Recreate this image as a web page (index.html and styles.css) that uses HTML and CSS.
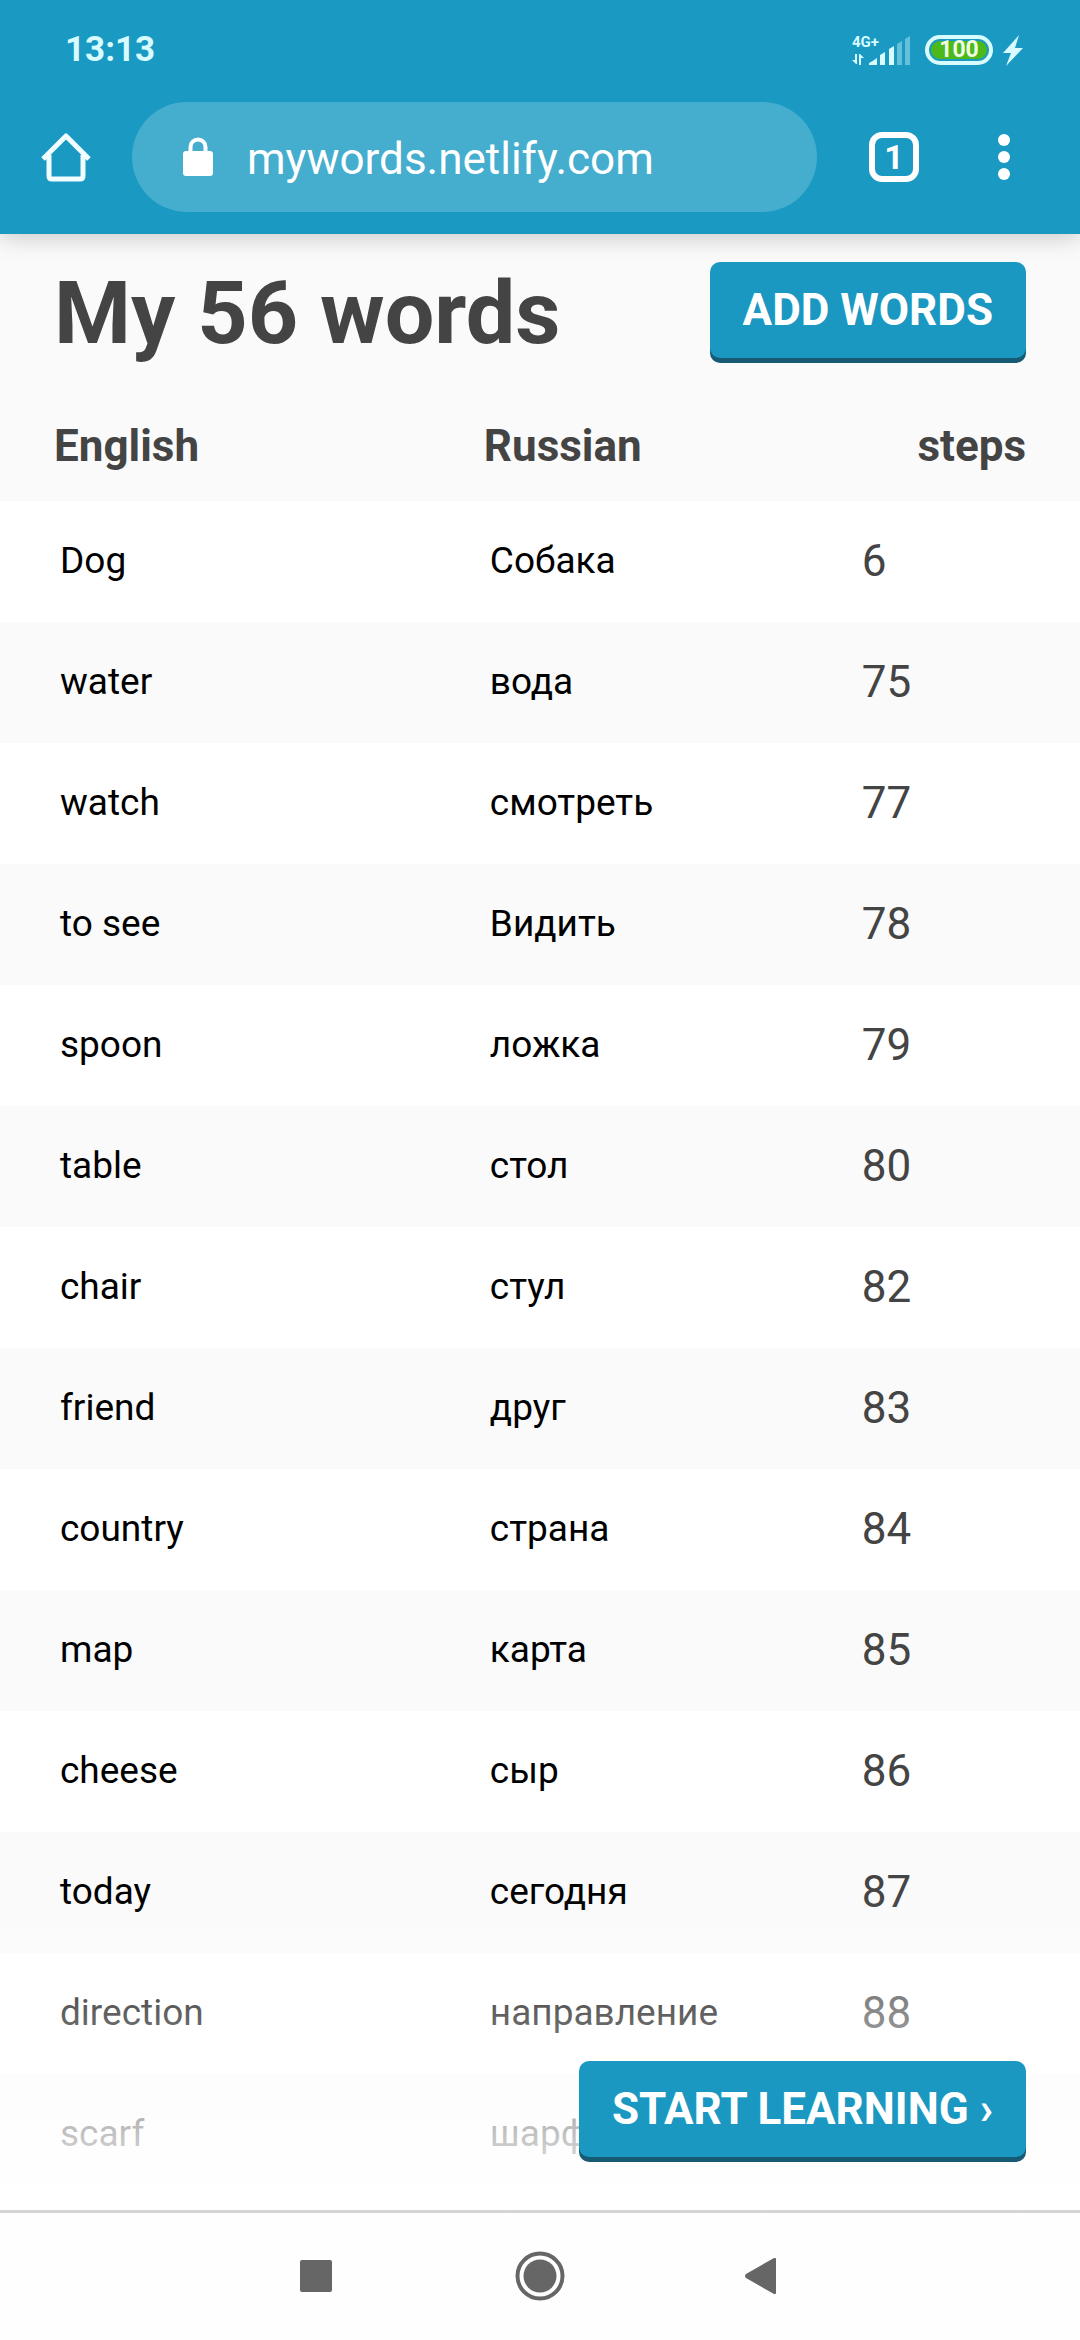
FILE: index.html
```html
<!DOCTYPE html>
<html lang="en">
<head>
<meta charset="utf-8">
<meta name="viewport" content="width=device-width, initial-scale=1">
<title>My words</title>
<link rel="stylesheet" href="styles.css">
</head>
<body>
<header class="chrome">
  <div class="status">
    <span class="clock">13:13</span>
    <div class="indicators">
      <svg class="signal" width="58" height="32" viewBox="0 0 58 32" aria-label="Signal">
        <text class="signal-label" x="0" y="13">4G+</text>
        <path d="M3 20h2v10h-1l-4-4h3zM7 31V20h1l4 4H9v7z" fill="#d8fbff"/>
        <path d="M17 31v-2q4-2 8-5v7zM28 31V21l5-3v13zM37 31v-16l5-3v19z" fill="#d8fbff"/>
        <path d="M45 31V10l5-3v24zM53 31V5l5-3v29z" fill="#d8fbff" opacity=".4"/>
      </svg>
      <span class="battery">100</span>
      <svg width="20" height="31" viewBox="0 0 20 31" aria-label="Charging">
        <path d="M16 0L0 18h8L3 31L20 13h-8z" fill="#d8fbff"/>
      </svg>
    </div>
  </div>
  <div class="toolbar">
    <button class="icon-button" type="button" aria-label="Home">
      <svg width="50" height="50" viewBox="0 0 50 50" fill="none" stroke="#f2fdff" stroke-width="5" stroke-linejoin="round">
        <path d="M2 27L25 4L48 27M8 23V44Q8 47 11 47H39Q42 47 42 44V23"/>
      </svg>
    </button>
    <label class="address">
      <svg width="30" height="40" viewBox="0 0 30 40" aria-hidden="true">
        <rect x="0" y="14" width="30" height="25" rx="3" fill="#fff"/>
        <path d="M7.500 15V10a7.500 7.500 0 0 1 15 0v5" fill="none" stroke="#fff" stroke-width="4"/>
      </svg>
      <input class="url" type="text" value="mywords.netlify.com" aria-label="Address">
    </label>
    <button class="tabs" type="button" aria-label="Open tabs">1</button>
    <button class="icon-button" type="button" aria-label="Menu">
      <svg width="14" height="50" viewBox="0 0 14 50" fill="#fff">
        <circle cx="7" cy="8" r="6"/><circle cx="7" cy="25" r="6"/><circle cx="7" cy="42" r="6"/>
      </svg>
    </button>
  </div>
</header>

<main class="page">
  <div class="heading">
    <h1 class="title">My 56 words</h1>
    <button class="button" type="button">ADD WORDS</button>
  </div>
  <table class="words">
    <thead>
      <tr><th class="english">English</th><th class="russian">Russian</th><th class="steps">steps</th></tr>
    </thead>
    <tbody>
      <tr><td>Dog</td><td>Собака</td><td>6</td></tr>
      <tr><td>water</td><td>вода</td><td>75</td></tr>
      <tr><td>watch</td><td>смотреть</td><td>77</td></tr>
      <tr><td>to see</td><td>Видить</td><td>78</td></tr>
      <tr><td>spoon</td><td>ложка</td><td>79</td></tr>
      <tr><td>table</td><td>стол</td><td>80</td></tr>
      <tr><td>chair</td><td>стул</td><td>82</td></tr>
      <tr><td>friend</td><td>друг</td><td>83</td></tr>
      <tr><td>country</td><td>страна</td><td>84</td></tr>
      <tr><td>map</td><td>карта</td><td>85</td></tr>
      <tr><td>cheese</td><td>сыр</td><td>86</td></tr>
      <tr><td>today</td><td>сегодня</td><td>87</td></tr>
      <tr><td>direction</td><td>направление</td><td>88</td></tr>
      <tr><td>scarf</td><td>шарф</td><td></td></tr>
    </tbody>
  </table>
  <div class="fade">
    <button class="button" type="button">START LEARNING ›</button>
  </div>
</main>

<nav class="system" aria-label="System">
  <button class="icon-button" type="button" aria-label="Recent apps">
    <svg width="50" height="50" viewBox="0 0 50 50"><rect x="9" y="9" width="32" height="32" rx="2" fill="#666"/></svg>
  </button>
  <button class="icon-button" type="button" aria-label="Home screen">
    <svg width="50" height="50" viewBox="0 0 50 50"><circle cx="25" cy="25" r="22.500" fill="none" stroke="#666" stroke-width="4"/><circle cx="25" cy="25" r="16.500" fill="#666"/></svg>
  </button>
  <button class="icon-button" type="button" aria-label="Back">
    <svg width="50" height="50" viewBox="0 0 50 50"><path d="M7 27Q5 25 7 23L35 7Q37 6.500 37 8V42Q37 43.500 35 43Z" fill="#666"/></svg>
  </button>
</nav>
</body>
</html>
```
FILE: styles.css
```css
* {
  box-sizing: border-box;
}

body {
  margin: 0;
  min-height: 100vh;
  display: flex;
  flex-direction: column;
  background: #fefefe;
  color: #444;
  font: 44px/1.2 Roboto, "Noto Sans", sans-serif;
}

button {
  font: inherit;
  border: 0;
  cursor: pointer;
}

svg {
  display: block;
}

/* Browser chrome */
.chrome {
  position: relative;
  z-index: 1;
  background: #1a9ac3;
  box-shadow: 0 2px 24px rgba(0, 0, 0, 0.22);
}

.status {
  display: flex;
  align-items: center;
  justify-content: space-between;
  height: 100px;
  padding: 0 57px 0 65px;
  color: #d8fbff;
}

.clock {
  font-size: 35px;
  font-weight: 700;
}

.indicators {
  display: flex;
  align-items: center;
  gap: 10px;
}

.signal {
  margin-right: 5px;
}

.signal-label {
  font-size: 15px;
  font-weight: 700;
  fill: #d8fbff;
}

.battery {
  display: flex;
  align-items: center;
  justify-content: center;
  width: 68px;
  height: 30px;
  border: 4px solid #d8fbff;
  border-radius: 15px;
  background: #4bb81c;
  box-shadow: inset 0 0 0 2px #1a9ac3;
  color: #f0fde0;
  font-size: 23px;
  font-weight: 700;
}

.toolbar {
  display: flex;
  align-items: center;
  padding: 2px 69px 22px 41px;
}

.icon-button {
  padding: 0;
  background: none;
}

.address {
  display: flex;
  flex: 1;
  align-items: center;
  gap: 34px;
  min-width: 0;
  height: 110px;
  margin: 0 52px 0 41px;
  padding: 0 51px;
  border-radius: 55px;
  background: #45adcd;
}

.url {
  flex: 1;
  min-width: 0;
  padding: 4px 0 0;
  border: 0;
  background: none;
  color: #fff;
  font: inherit;
}

.tabs {
  width: 50px;
  height: 50px;
  margin-right: 78px;
  padding: 0;
  border: 6px solid #fff;
  border-radius: 13px;
  background: none;
  color: #fff;
  font-size: 34px;
  font-weight: 700;
  line-height: 38px;
}

/* Word list */
.page {
  position: relative;
  flex: 1;
  background: #fafafa;
}

.heading {
  display: flex;
  align-items: center;
  justify-content: space-between;
  padding: 28px 5%;
}

.title {
  margin: 0;
  font-size: 88px;
  line-height: 100px;
}

.button {
  height: 96px;
  margin-bottom: 5px;
  padding: 0 33px;
  border-radius: 10px;
  background: #1a98c1;
  box-shadow: 0 5px 0 #165a73;
  color: #fff;
  font-weight: 700;
}

.words {
  width: 100%;
  table-layout: fixed;
  border-collapse: collapse;
}

.words th {
  height: 110px;
  padding: 0;
  text-align: left;
}

.words td {
  height: 121px;
  padding: 0 0 0 6px;
  color: #000;
  font-size: 37px;
}

.words th:first-child {
  padding-left: 54px;
}

.words td:first-child {
  padding-left: 60px;
}

.words td:last-child {
  padding-left: 0;
  color: #444;
  font-size: 44px;
}

.words .english {
  width: 44.8%;
}

.words .russian {
  width: 35%;
}

.words .steps {
  padding-right: 54px;
  text-align: right;
}

.words tbody tr:nth-child(odd) {
  background: #fff;
}

.fade {
  position: absolute;
  right: 0;
  bottom: 0;
  left: 0;
  display: flex;
  align-items: flex-end;
  justify-content: flex-end;
  height: 315px;
  padding: 0 5% 48px;
  background: linear-gradient(rgba(255, 255, 255, 0), #fff);
}

/* System navigation */
.system {
  display: flex;
  align-items: center;
  justify-content: center;
  gap: 174px;
  height: 130px;
  padding-bottom: 2px;
  border-top: 3px solid #d3d5d3;
}
```
